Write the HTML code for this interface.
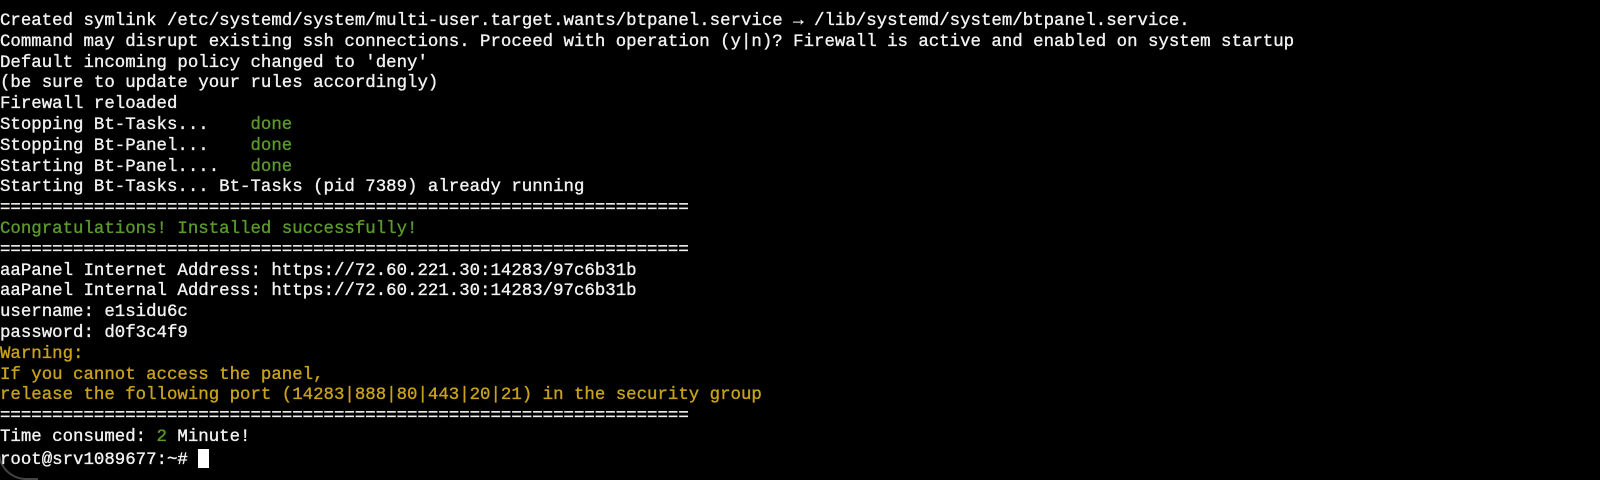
<!DOCTYPE html>
<html><head><meta charset="utf-8"><style>
html,body{margin:0;padding:0;background:#000;width:1600px;height:479px;overflow:hidden}
pre{margin:0;position:absolute;left:0;top:12px;font-family:"Liberation Mono","DejaVu Sans Mono",monospace;font-size:17.4px;line-height:20.8px;color:#f2f2f2;font-weight:normal;-webkit-text-stroke:0.35px #f2f2f2}
.g{color:#5b9a2a;-webkit-text-stroke-color:#5b9a2a}.y{color:#c9a21a;-webkit-text-stroke-color:#c9a21a}
.cur{display:inline-block;width:11px;height:19px;background:#fff;vertical-align:-4px}
.corner{position:absolute;left:-2px;top:440px;width:40px;height:40px;border-bottom-left-radius:28px;border-left:2px solid #444;border-bottom:2px solid #444;box-sizing:border-box}
</style></head><body>
<div class="corner"></div>
<pre>Created symlink /etc/systemd/system/multi-user.target.wants/btpanel.service → /lib/systemd/system/btpanel.service.
Command may disrupt existing ssh connections. Proceed with operation (y|n)? Firewall is active and enabled on system startup
Default incoming policy changed to 'deny'
(be sure to update your rules accordingly)
Firewall reloaded
Stopping Bt-Tasks...    <span class="g">done</span>
Stopping Bt-Panel...    <span class="g">done</span>
Starting Bt-Panel....   <span class="g">done</span>
Starting Bt-Tasks... Bt-Tasks (pid 7389) already running
==================================================================
<span class="g">Congratulations! Installed successfully!</span>
==================================================================
aaPanel Internet Address: https://72.60.221.30:14283/97c6b31b
aaPanel Internal Address: https://72.60.221.30:14283/97c6b31b
username: e1sidu6c
password: d0f3c4f9
<span class="y">Warning:</span>
<span class="y">If you cannot access the panel,</span>
<span class="y">release the following port (14283|888|80|443|20|21) in the security group</span>
==================================================================
Time consumed: <span class="g">2</span> Minute!
root@srv1089677:~# <span class="cur"></span></pre>
</body></html>
